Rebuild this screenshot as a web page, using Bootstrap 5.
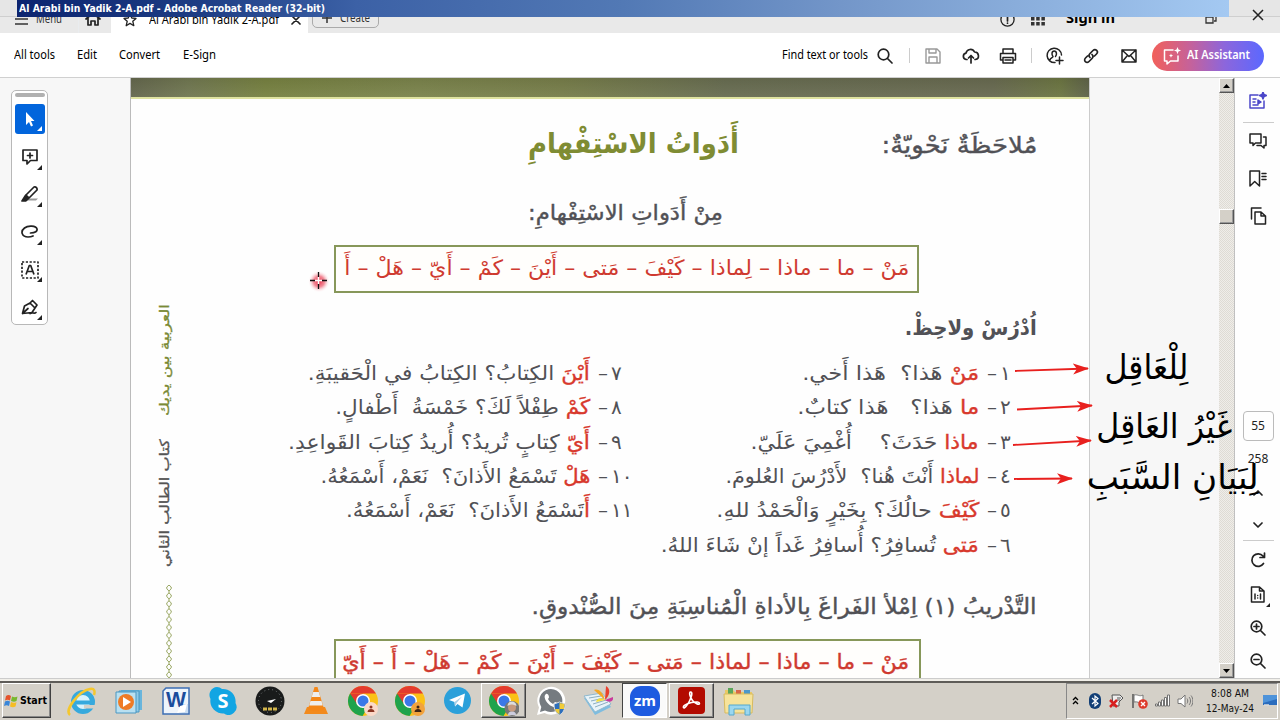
<!DOCTYPE html>
<html lang="en">
<head>
  <meta charset="UTF-8" />
  <meta name="viewport" content="width=device-width,initial-scale=1" />
  <title>Al Arabi bin Yadik 2-A.pdf - Adobe Acrobat Reader (32-bit)</title>
  <link href="https://cdn.jsdelivr.net/npm/bootstrap@5.3.0/dist/css/bootstrap.min.css" rel="stylesheet"/>
  <style>
    body {
      width: 1280px;
      height: 720px;
      overflow: hidden;
      font-family: 'Noto Sans', 'Open Sans', sans-serif;
      font-size: 12px;
      line-height: 1.2;
      color: #222;
      background: #fff;
    }
    svg { display: block; flex: none; }
    .ln { fill: none; stroke: #222; stroke-width: 1.7; stroke-linecap: round; stroke-linejoin: round; }
    [data-w] { display: inline-block; white-space: nowrap; transform-origin: left center; }
    .arabic [data-w] { transform-origin: right center; }
    /* --- Window top --- */
    .tabs-bar { height: 33px; background: #e9e9e9; overflow: hidden; padding-top: 5px; color: #333; }
    .tabs-bar .open-tab { width: 197px; background: #fff; margin-top: -5px; height: 33px; padding: 7px 7px 0 12px; }
    .create-btn { width: 67px; height: 28px; border: 1px solid #aaa; border-radius: 5px; margin-top: -5px; padding: 8px 0 0 9px; }
    .caption-bar {
      position: absolute; left: 17px; top: 0; width: 1212px; height: 17px;
      background: linear-gradient(90deg, #0c2470 0%, #1d3d84 15%, #3c61a6 28%, #5279b5 50%, #7396c9 68%, #8db1de 85%, #a4c9f2 100%);
      font: bold 11px/17px 'DejaVu Sans', sans-serif;
      color: #fff; padding-left: 2px;
    }
    .caption-left { position: absolute; left: 0; top: 0; width: 1280px; height: 17px; background: #e6e6e6; border-bottom: 1px solid #cfcfcf; }
    .tool-bar { height: 45px; border-bottom: 1px solid #d0d0d0; background: #fff; padding-top: 1px; }
    .tool-bar .v-sep { width: 1px; height: 15px; background: #ccc; }
    .ai-btn { width: 112px; height: 30px; border-radius: 15px; background: linear-gradient(90deg, #f2605a 0%, #c4629c 35%, #8c66dc 65%, #5b68ff 100%); color: #fff; font-weight: 600; padding-left: 11px; }
    /* --- Work area --- */
    .work { height: 601px; background: #f7f7f7; border-bottom: 1px solid #ccc; }
    .left-pane { width: 130px; padding: 12px 0 0 11px; }
    .quick-tools { width: 37px; height: 235px; background: #fff; border: 1px solid #b8b8b8; border-radius: 5px; padding: 2px 3px; }
    .quick-tools .grip { width: 30px; height: 4px; background: #b0b0b0; border-radius: 2px; margin-bottom: 7px; }
    .tool-cell { width: 30px; height: 37.6px; }
    .tool-cell.picked { height: 30px; background: #0265dc; border-radius: 3px; margin-bottom: 4px; }
    /* --- Book page --- */
    .sheet { width: 960px; height: 600px; background: #fefefe; border-left: 1px solid #bbb; border-right: 1px solid #ccc; overflow: hidden; }
    .band {
      height: 21px; border-bottom: 2px solid #dfe3a0;
      background: linear-gradient(180deg, rgba(60,60,40,.1), rgba(255,255,255,.06)), linear-gradient(90deg, #62654c 0%, #6f7650 6%, #75803f 14%, #79824a 30%, #757c48 45%, #666b50 62%, #66684f 90%, #6a7440 97%, #5c6047 100%);
    }
    .spine { width: 60px; height: 579px; }
    .arabic { direction: rtl; font-family: 'DejaVu Sans', sans-serif; color: #515156; white-space: nowrap; }
    .lesson { padding-right: 48px; width: 898px; font-size: 20px; }
    .title-row { height: 89px; padding-right: 4px; font-size: 23px; }
    .title-row .big { font-size: 28px; font-weight: 700; color: #7f8c33; margin-right: 142px; }
    .sub-row { height: 51px; padding-right: 318px; font-size: 21px; margin-bottom: 6px; }
    .word-box { width: 585px; height: 48px; border: 2px solid #87975a; margin-right: 122px; color: #cf3a30; font-size: 21px; padding-right: 8px; background: #fffefc; }
    .heading { height: 56px; margin-top: 8px; padding-right: 4px; font-size: 21px; font-weight: 700; }
    .items { height: 206px; }
    .items .half { width: 389px; }
    .item { height: 34.3px; position: relative; top: -1px; }
    .item .num { width: 62px; padding-left: 8px; text-align: left; }
    .item .num i { font-style: normal; margin-left: 3px; }
    .item em { font-style: normal; color: #d8392d; -webkit-text-stroke: .35px #d8392d; }
    .drill { height: 63px; margin-top: 13px; padding-right: 4px; font-size: 22px; }
    .semi { -webkit-text-stroke: .4px currentColor; }
    /* --- Scrollbar and right rail --- */
    .gap-pane { width: 129px; }
    .scroller { width: 16px; border-right: 1px solid #c0c0c0; background: repeating-conic-gradient(#dedbd4 0 25%, #efede9 0 50%) 0 0 / 2px 2px; }
    .sc-btn { width: 15px; height: 15px; background: #d4d0c8; border: 1px solid; border-color: #fff #555 #555 #fff; box-shadow: inset -1px -1px 0 #999; }
    .sc-thumb { margin-top: 116px; }
    .rail { width: 45px; background: #fefefe; padding-left: 1px; }
    .rail .cell { height: 37px; }
    .rail .h-sep { width: 31px; height: 1px; background: #ccc; }
    .page-no { width: 31px; height: 30px; border: 1px solid #bbb; border-radius: 4px; }
    /* --- Annotations over the page --- */
    .notes { position: absolute; left: 0; top: 0; pointer-events: none; }
    .note-text { position: absolute; font-size: 34px; line-height: 40px; color: #000; }
    /* --- Taskbar --- */
    .task-bar { height: 41px; background: #d4d0c8; border-top: 2px solid #f1efe9; box-shadow: inset 0 2px 0 #5e5c58; }
    .start-btn { width: 49px; height: 35px; margin-left: 2px; border: 1px solid; border-color: #fff #404040 #404040 #fff; box-shadow: inset -1px -1px 0 #888; font: bold 11px 'DejaVu Sans', sans-serif; color: #000; padding-left: 1px; }
    .slot { width: 46.9px; height: 36px; }
    .slot .running { width: 45px; height: 35px; border: 1px solid; border-color: #fff #444 #444 #fff; box-shadow: inset -1px -1px 0 #888; }
    .slot .current { border-color: #444 #fff #fff #444; background: #fafafa; box-shadow: none; }
    .tray { width: 212px; height: 36px; margin-right: 2px; border: 1px solid; border-color: #888 #fff #fff #888; color: #111; }
    .clock { width: 52px; font: 11px/15px 'DejaVu Sans Condensed', 'DejaVu Sans', sans-serif; }
  </style>
</head>
<body>
  <svg width="0" height="0" class="position-absolute">
    <defs>
      <symbol id="chrome" viewBox="0 0 30 30">
        <circle cx="15" cy="15" r="15" fill="#fbc116"/>
        <path d="M15 15L2 7.5A15 15 0 0 0 14.5 30L21.5 18.500z" fill="#1fa34c"/>
        <path d="M2 7.5A15 15 0 0 1 28 7.5H15z" fill="#e33b2e"/>
        <path d="M2 7.500L9 18l6-10.500z" fill="#e33b2e"/>
        <circle cx="15" cy="15" r="7" fill="#fff"/><circle cx="15" cy="15" r="5.500" fill="#3b78e7"/>
      </symbol>
      <symbol id="corner" viewBox="0 0 4 4"><path d="M4 0V4H0z" fill="#222"/></symbol>
      <pattern id="chain" width="6" height="7.900" patternUnits="userSpaceOnUse"><path d="M3 0L.8 2v1.800L3 6l2.200-2.200V2zM3 6v1.900" fill="none" stroke="#8b9a4c" stroke-width=".9"/></pattern>
      <marker id="tip" markerWidth="16" markerHeight="12" refX="15" refY="6" orient="auto" markerUnits="userSpaceOnUse"><path d="M0 0.500L16 6L0 11.500L4 6z" fill="#e8201e"/></marker>
      <radialGradient id="glow"><stop offset="0" stop-color="#e8304a"/><stop offset=".5" stop-color="#f07080" stop-opacity=".8"/><stop offset="1" stop-color="#fff" stop-opacity="0"/></radialGradient>
    </defs>
  </svg>

  <!-- Tabs, mostly covered by the caption -->
  <div class="position-relative">
    <div class="tabs-bar d-flex">
      <div class="d-flex align-items-center gap-2" style="width:78px;padding-left:15px">
        <svg width="13" height="12"><path d="M0 1h13M0 6h13M0 11h13" stroke="#333" stroke-width="1.500"/></svg><span data-w="26">Menu</span>
      </div>
      <div class="d-flex align-items-center border-start border-secondary-subtle" style="width:33px;padding-left:6px">
        <svg width="16" height="16" class="ln"><path d="M1 8L8 2l7 6M3 7v7h3V10h4v4h3V7"/></svg>
      </div>
      <div class="open-tab d-flex align-items-center justify-content-between">
        <svg width="14" height="14" class="ln" style="stroke-width:1.300"><path d="M7 1l1.800 4 4.200.4-3.200 2.900 1 4.400L7 10.400 3.200 12.700l1-4.400L1 5.400 5.200 5z"/></svg>
        <span data-w="130" class="text-black">Al Arabi bin Yadik 2-A.pdf</span>
        <svg width="10" height="10" class="ln"><path d="M1 1l8 8M9 1l-8 8"/></svg>
      </div>
      <div class="create-btn d-flex align-items-center gap-2 ms-1">
        <svg width="10" height="10"><path d="M0 5h10M5 0v10" stroke="#333" stroke-width="1.500"/></svg><span data-w="30">Create</span>
      </div>
      <div class="d-flex align-items-center ms-auto" style="width:281px;padding-left:1px">
        <svg width="15" height="15" class="ln"><circle cx="7.500" cy="7.500" r="6.600" style="stroke-width:1.300"/><path d="M7.500 4v5M7.500 11v.2"/></svg>
        <svg width="14" height="14" fill="#333" class="ms-3"><path d="M0 0h3.500v3.500H0zM5.200 0h3.500v3.500H5.200zM10.400 0h3.500v3.500h-3.500zM0 5h3.500v3.500H0zM5.200 5h3.500v3.500H5.200zM10.400 5h3.500v3.500h-3.500zM0 10h3.500v3.500H0zM5.200 10h3.500v3.500H5.200zM10.400 10h3.500v3.500h-3.500z"/></svg>
        <b data-w="49" class="text-black" style="font-size:14px;margin-left:21px;line-height:1;padding-bottom:3px">Sign in</b>
        <svg width="12" height="12" fill="none" stroke="#333" stroke-width="1.300" style="margin-left:90px"><path d="M1 4h7v6H1zM4 3V1h7v7H9"/></svg>
      </div>
    </div>
    <div class="caption-left"></div>
    <div class="caption-bar"><span data-w="306">Al Arabi bin Yadik 2-A.pdf - Adobe Acrobat Reader (32-bit)</span></div>
    <svg width="12" height="12" class="position-absolute" style="left:1252px;top:9px"><path d="M1 1l10 10M11 1L1 11" stroke="#222" stroke-width="1.500"/></svg>
  </div>

  <!-- Toolbar -->
  <div class="tool-bar d-flex align-items-center text-black">
    <div style="width:63px;padding-left:14px"><span data-w="41">All tools</span></div>
    <div style="width:42px;padding-left:14px"><span data-w="20">Edit</span></div>
    <div style="width:64px;padding-left:14px"><span data-w="41">Convert</span></div>
    <div style="width:80px;padding-left:14px"><span data-w="33">E-Sign</span></div>
    <div class="d-flex align-items-center ms-auto">
      <span data-w="86">Find text or tools</span>
      <svg width="16" height="16" class="ln" style="margin-left:9px"><circle cx="6.500" cy="6.500" r="5.300"/><path d="M10.500 10.500L15 15"/></svg>
      <div class="v-sep" style="margin:0 15px 0 16px"></div>
      <svg width="16" height="16" class="ln" style="stroke:#999;stroke-width:1.400"><path d="M1 1h11l3 3v11H1zM4 1v4h7V1M4 15V9h8v6"/></svg>
      <svg width="18" height="16" class="ln" style="margin-left:21px"><path d="M5 11.500H4a3.200 3.200 0 0 1 0-6.300A4.500 4.500 0 0 1 12.500 4 3.800 3.800 0 0 1 13.500 11.500H13M9 15V8M6.500 10L9 7.500 11.500 10"/></svg>
      <svg width="18" height="16" class="ln" style="margin-left:19px;stroke-width:1.500"><path d="M4 5V1h10v4M4 12H1.500V5.500h15V12H14M4 9.500h10V15H4zM6 12h6"/></svg>
      <div class="v-sep" style="margin:0 14px 0 14px"></div>
      <svg width="18" height="18" class="ln" style="stroke-width:1.500"><path d="M9 15.500A7.200 7.200 0 1 1 15.500 8M4 13c0-2 3-2 3-3.500C5.500 8 5.500 4 8.200 4s2.800 4 1.300 5.500M13.500 10v7M10 13.500h7"/></svg>
      <svg width="16" height="16" class="ln" style="margin-left:19px"><path d="M7 9.500C5.500 8 6 6.500 7 5.500L10 2.500c2.500-2.500 6 1 3.500 3.500L11.500 8M9 6.500c1.500 1.500 1 3 0 4L6 13.500c-2.500 2.500-6-1-3.500-3.500L4.500 8"/></svg>
      <svg width="16" height="14" class="ln" style="margin-left:22px;stroke-width:1.500"><path d="M1 1h14v12H1zL8 7.500 15 1M1 13l5-6M15 13l-5-6"/></svg>
      <div class="ai-btn d-flex align-items-center" style="margin:0 16px 0 15px">
        <svg width="19" height="18" class="ln" style="stroke:#fff;stroke-width:1.500"><path d="M10 3H1.500v11H4v3l3.500-3H15V9"/><path d="M14.500 0l1 2.600 2.600 1-2.600 1-1 2.600-1-2.600-2.600-1 2.600-1zM8 6.500l.6 1.500 1.500.600-1.500.6L8 10.700l-.6-1.500L6 8.600 7.400 8z" fill="#fff" stroke="none"/></svg>
        <span data-w="63" style="margin-left:5px">AI Assistant</span>
      </div>
    </div>
  </div>

  <div class="work d-flex position-relative">
    <div class="left-pane">
      <div class="quick-tools">
        <div class="grip"></div>
        <div class="tool-cell picked d-flex align-items-center justify-content-center position-relative">
          <svg width="10" height="15"><path d="M1 0l8.500 9H6l2 4.500-2 1L4 10l-3 3z" fill="#fff"/></svg>
          <svg width="5" height="5" class="position-absolute" style="right:3px;bottom:3px"><path d="M5 0V5H0z" fill="#fff"/></svg>
        </div>
        <div class="tool-cell d-flex align-items-center justify-content-center position-relative">
          <svg width="16" height="16" class="ln"><path d="M1 1h14v10.500H8.500L5 15v-3.500H1zM8 4v5M5.500 6.500h5"/></svg>
          <svg width="5" height="5" class="position-absolute" style="right:3px;bottom:6px"><use href="#corner"/></svg>
        </div>
        <div class="tool-cell d-flex align-items-center justify-content-center position-relative">
          <svg width="18" height="16" class="ln"><path d="M9 12.500h8l-2 2H6z" fill="#999" stroke="none"/><path d="M5 9l8-8c2-.5 3.500 1 3 3L8 12zM5 9l3 3"/><path d="M4.500 9.500l3 3-3 2.500H1z" fill="#222"/></svg>
          <svg width="5" height="5" class="position-absolute" style="right:3px;bottom:6px"><use href="#corner"/></svg>
        </div>
        <div class="tool-cell d-flex align-items-center justify-content-center position-relative">
          <svg width="18" height="14" class="ln"><path d="M9.500 8c5 0 7-2 6.500-4C15 .5 7 .2 3.500 3-1 6.500 1 12 7 12c2.500 0 4-.5 5-1"/></svg>
          <svg width="5" height="5" class="position-absolute" style="right:3px;bottom:6px"><use href="#corner"/></svg>
        </div>
        <div class="tool-cell d-flex align-items-center justify-content-center position-relative">
          <svg width="18" height="18" class="ln" style="stroke-linecap:butt"><path d="M1 1h16v16H1z" stroke-dasharray="2.200 1.600"/><path d="M5 13.500L8.300 4.500h1.400L13 13.500M6.200 10.500h5.600"/></svg>
          <svg width="5" height="5" class="position-absolute" style="right:3px;bottom:6px"><use href="#corner"/></svg>
        </div>
        <div class="tool-cell d-flex align-items-center justify-content-center position-relative">
          <svg width="18" height="17" class="ln"><path d="M1.500 14.500L3.500 7 9 4l5 5-3 4.500zL7 9.500M9 4l2.500-2.500L16 6l-2 3M9 14.500c3-2 4 1 6-1"/></svg>
          <svg width="5" height="5" class="position-absolute" style="right:3px;bottom:6px"><use href="#corner"/></svg>
        </div>
      </div>
    </div>

    <!-- Scanned book page -->
    <div class="sheet">
      <div class="band"></div>
      <div class="d-flex">
        <svg class="spine" font-family="DejaVu Sans, sans-serif" font-size="13">
          <g direction="rtl">
            <text transform="translate(38 205) rotate(-90)" textLength="112" lengthAdjust="spacingAndGlyphs" fill="#7a8a35" stroke="#7a8a35" stroke-width=".3">العربية بين يديك</text>
            <text transform="translate(38 340) rotate(-90)" textLength="128" lengthAdjust="spacingAndGlyphs" fill="#555" stroke="#555" stroke-width=".3">كتاب الطالب الثاني</text>
          </g>
          <rect width="6" height="95" transform="translate(35 486)" fill="url(#chain)"/>
        </svg>
        <div class="lesson arabic">
          <div class="title-row d-flex align-items-center">
            <span class="semi" data-w="156" style="margin-top:4px">مُلاحَظَةٌ نَحْويّةٌ:</span>
            <span class="big"><span data-w="211">أَدَواتُ الاسْتِفْهامِ</span></span>
          </div>
          <div class="sub-row d-flex align-items-center"><span class="semi" data-w="195">مِنْ أَدَواتِ الاسْتِفْهامِ:</span></div>
          <div class="word-box d-flex align-items-center"><span data-w="565">مَنْ – ما – ماذا – لِماذا – كَيْفَ – مَتى – أَيْنَ – كَمْ – أَيّ – هَلْ – أَ</span></div>
          <div class="heading d-flex align-items-center"><span data-w="132">اُدْرُسْ ولاحِظْ.</span></div>
          <div class="items d-flex">
            <div class="half" id="colA"></div>
            <div class="half" id="colB"></div>
          </div>
          <div class="drill d-flex align-items-center"><span class="semi" data-w="505">التَّدْريبُ (١) اِمْلأ الفَراغَ بِالأداةِ الْمُناسِبَةِ مِنَ الصُّنْدوقِ.</span></div>
          <div class="word-box d-flex align-items-center" style="width:587px;margin-right:120px;padding-right:10px"><span class="semi" data-w="567">مَنْ – ما – ماذا – لماذا – مَتى – كَيْفَ – أَيْنَ – كَمْ – هَلْ – أَ – أَيّ</span></div>
        </div>
      </div>
    </div>
    <div class="gap-pane"></div>

    <div class="scroller d-flex flex-column ms-auto">
      <div class="sc-btn d-flex align-items-center justify-content-center"><svg width="7" height="4"><path d="M0 4L3.500 0 7 4z"/></svg></div>
      <div class="sc-btn sc-thumb"></div>
      <div class="sc-btn d-flex align-items-center justify-content-center mt-auto"><svg width="7" height="4"><path d="M0 0h7L3.500 4z"/></svg></div>
    </div>

    <div class="rail d-flex flex-column align-items-center">
      <div class="cell d-flex align-items-center" style="height:44px"><svg width="18" height="17" class="ln" style="stroke:#4b47c9;stroke-width:1.500"><path d="M9 3H1v13h14V9M4 7h3M4 10h2M4 13h5"/><path d="M14 0l1 2.500L17.500 3.500 15 4.500 14 7l-1-2.500-2.500-1 2.500-1zM9 8l3 2-3 2z" fill="#4b47c9"/></svg></div>
      <div class="h-sep"></div>
      <div class="cell d-flex align-items-center"><svg width="18" height="17" class="ln" style="stroke-width:1.500"><path d="M1 1h11v9H6.500L4 12.500V10H1zM14.500 4H17v8.500h-2V15l-3-2.500H8"/></svg></div>
      <div class="cell d-flex align-items-center"><svg width="18" height="17" class="ln" style="stroke-width:1.500"><path d="M1 1h9.500v15L5.700 11.500 1 16zM13 3.500h4M13 6.500h4M13 9.500h4"/></svg></div>
      <div class="cell d-flex align-items-center"><svg width="17" height="18" class="ln" style="stroke-width:1.500"><path d="M5 5h6l4.500 4v8H5zM11 5v4h4.500M1.500 12V1H11"/></svg></div>
      <div class="page-no d-flex align-items-center justify-content-center" style="margin-top:177px">55</div>
      <div class="d-flex align-items-center" style="height:36px">258</div>
      <div class="d-flex align-items-center" style="height:32px"><svg width="10" height="6" class="ln"><path d="M1 5l4-4 4 4"/></svg></div>
      <div class="d-flex align-items-center" style="height:31px"><svg width="10" height="6" class="ln"><path d="M1 1l4 4 4-4"/></svg></div>
      <div class="h-sep"></div>
      <div class="d-flex align-items-center" style="height:37px"><svg width="16" height="16" class="ln"><path d="M13.500 11.500a6.300 6.300 0 1 1-.5-7.500M14.500 1v4.500H10"/></svg></div>
      <div class="d-flex align-items-center position-relative" style="height:33px"><svg width="16" height="17" class="ln" style="stroke-width:1.500"><path d="M1.500 1h8L14 5v11H1.500zM9.500 1v4H14M5 8v5M10.500 8v5M7.700 9.500v.1M7.700 12v.1"/></svg><svg width="4" height="4" class="position-absolute" style="right:-4px;bottom:4px"><use href="#corner"/></svg></div>
      <div class="d-flex align-items-center" style="height:33px"><svg width="16" height="16" class="ln"><circle cx="6.500" cy="6.500" r="5.300"/><path d="M10.500 10.500L15 15M4 6.500h5M6.500 4v5"/></svg></div>
      <div class="d-flex align-items-center" style="height:33px"><svg width="16" height="16" class="ln"><circle cx="6.500" cy="6.500" r="5.300"/><path d="M10.500 10.500L15 15M4 6.500h5"/></svg></div>
    </div>

    <!-- Teacher's marks -->
    <svg class="notes" width="1280" height="600" stroke="#e8201e" stroke-width="1.800">
      <path d="M1015 293L1088 290.500" marker-end="url(#tip)"/>
      <path d="M1017 331.500L1092 327.500" marker-end="url(#tip)"/>
      <path d="M1013 367L1091 362.500" marker-end="url(#tip)"/>
      <path d="M1014 401L1072 400.500" marker-end="url(#tip)"/>
      <circle cx="319" cy="203.500" r="11" fill="url(#glow)" stroke="none"/>
      <path d="M310 202.500h5M322 202.500h5M318.500 194v5M318.500 206v5" stroke="#111" stroke-width="1.300"/>
      <path d="M318.500 199v7M315 202.500h7" stroke="#fff" stroke-width="1.500"/>
    </svg>
    <div class="arabic">
      <div class="note-text" style="right:92px;top:269px"><span data-w="84">لِلْعَاقِل</span></div>
      <div class="note-text" style="right:48px;top:328px"><span data-w="136">غَيْرُ العَاقِل</span></div>
      <div class="note-text" style="right:21px;top:379px"><span data-w="172">لِبَيَانِ السَّبَبِ</span></div>
    </div>
  </div>

  <!-- Taskbar -->
  <div class="task-bar d-flex align-items-center">
    <div class="start-btn d-flex align-items-center">
      <svg width="16" height="14"><path d="M2 2c2-1.500 3.500-1 5 0L6 6.500c-1.500-1-3-1.300-5 0z" fill="#e5532c"/><path d="M8 2.500c2 1 3.500 1 5.500 0L12.500 7c-2 1.200-3.500.8-5.500 0z" fill="#79b82e"/><path d="M1 7.500c2-1.300 3.500-1 5 0L5 12c-1.500-1-3-1.200-5 0z" fill="#3a86d8"/><path d="M7 8c2 1 3.500 1.200 5.500 0l-1 4.500c-2 1-3.500.8-5.500 0z" fill="#f5bd25"/></svg>
      <span data-w="27">Start</span>
    </div>
    <div class="d-flex align-items-center" style="margin-left:7.500px">
      <div class="slot"><svg width="30" height="30" viewBox="0 0 30 30"><circle cx="16" cy="16" r="9.500" fill="#d8f2fc" stroke="#36a9dd" stroke-width="5"/><path d="M9 14.500h14v4H9z" fill="#36a9dd"/><path d="M17 19h12v3.500H17z" fill="#d4d0c8"/><path d="M3 29C-3 24 12 5 23 3c5-1 5 3 4 6" fill="none" stroke="#f4c72e" stroke-width="2.500"/></svg></div>
      <div class="slot"><svg width="28" height="28" viewBox="0 0 28 28"><path d="M6 3h21v20H6z" fill="#69b5dc"/><path d="M4 4h20v21H4z" fill="#8fcbe8" stroke="#4a97c2"/><path d="M1 5h20v21H1z" fill="#b9e0f1" stroke="#4a97c2"/><circle cx="11" cy="15" r="8" fill="#ee7b26"/><path d="M8 10l8 5-8 5z" fill="#fff"/></svg></div>
      <div class="slot"><svg width="28" height="28" viewBox="0 0 28 28"><path d="M4 1h23v26H1V4z" fill="#eef4fb" stroke="#3c6eb4" stroke-width="1.500"/><path d="M17 17h9v9h-9z" fill="#c8ddf3"/><text x="4" y="20" font-family="Liberation Sans, sans-serif" font-weight="700" font-size="22" textLength="20" lengthAdjust="spacingAndGlyphs" fill="#1b4c9c">W</text><path d="M15 26l3-7 7-2-2 8z" fill="#fff"/></svg></div>
      <div class="slot"><svg width="28" height="28" viewBox="0 0 28 28"><path d="M8 0a8 8 0 0 1 5 2A12.500 12.500 0 0 1 26.500 16 8 8 0 0 1 15 26.500 12.500 12.500 0 0 1 1.500 12 8 8 0 0 1 8 0z" fill="#12a5e3"/><text x="14" y="21" text-anchor="middle" font-family="Noto Sans, sans-serif" font-weight="700" font-size="20" fill="#fff">S</text></svg></div>
      <div class="slot"><svg width="30" height="30" viewBox="0 0 30 30"><circle cx="15" cy="15" r="14.500" fill="#191b1b"/><circle cx="15" cy="15" r="11.500" fill="none" stroke="#7b8080" stroke-dasharray="1 3"/><path d="M12 15l9-2-5 4z" fill="#fff"/><path d="M8 23h14" stroke="#d3b64c" stroke-width="3" stroke-dasharray="4 1"/></svg></div>
      <div class="slot"><svg width="26" height="29" viewBox="0 0 26 29"><path d="M4 21h18l3 7H1z" fill="#f28a1d"/><path d="M11.500 1h3L21 23c-3 3-13 3-16 0z" fill="#f48719"/><path d="M10.200 6h5.600l1.500 5H8.700zM7.500 15h11l1.200 4.500H6.200z" fill="#eee"/></svg></div>
      <div class="slot"><svg width="30" height="30" viewBox="0 0 30 30"><use href="#chrome"/><circle cx="23" cy="23" r="7" fill="#fbd9c8"/><circle cx="23" cy="21" r="1.500" fill="#8b3521"/><path d="M19.500 26c0-4 7-4 7 0z" fill="#8b3521"/></svg></div>
      <div class="slot"><svg width="30" height="30" viewBox="0 0 30 30"><use href="#chrome"/><circle cx="23" cy="23" r="7" fill="#f2a33c"/><circle cx="23" cy="21" r="1.500" fill="#402512"/><path d="M19.500 26c0-4 7-4 7 0z" fill="#402512"/></svg></div>
      <div class="slot"><svg width="27" height="27" viewBox="0 0 27 27"><circle cx="13.500" cy="13.500" r="13.500" fill="#2ba0da"/><path d="M5 13L21 6.500 18.500 20.500 13.500 17 11 19.500 10.500 15z" fill="#fff"/><path d="M10.500 15L18 9.500 12.500 16 11 19.500z" fill="#a9cfe6"/></svg></div>
      <div class="slot"><div class="running"><svg width="30" height="30" viewBox="0 0 30 30"><use href="#chrome"/><circle cx="23" cy="22.500" r="7.500" fill="#777"/><path d="M19 29c0-5 8-5 8 0z" fill="#ccd"/><circle cx="23" cy="21.500" r="4" fill="#c79a7f"/><path d="M18.500 20c0-6 9-6 9 0-3-2-6-2-9 0z" fill="#ddd"/></svg></div></div>
      <div class="slot"><svg width="30" height="30" viewBox="0 0 30 30"><path d="M1 29l2-7.500A14 14 0 1 1 8.500 27z" fill="#fff"/><path d="M4 26l1.300-5A11.500 11.500 0 1 1 9 24.500z" fill="#757b80"/><path d="M10 8c2-1 3 2 3 3.500l-1 1.500c1 2 3 4 5 5l2-2c2 .5 4 1.500 3.500 3-1 3-6 3-10-1S7.500 9.500 10 8z" fill="#fff"/><path d="M18 18l5.500-2 5.500 2c0 6-2 9-5.500 11-3.500-2-5.500-5-5.500-11z" fill="#2e6fbc" stroke="#ddd"/><path d="M23.500 17v6H28l.5-5zM23.500 23v5.500c-2-1.500-4-3-4.500-5.500z" fill="#f1cc38"/></svg></div>
      <div class="slot"><svg width="30" height="30" viewBox="0 0 30 30"><path d="M1 12l18-3 9 12-16 8z" fill="#7ebde0"/><path d="M1 10l18-3 9 11-16 8z" fill="#e8f3f9" stroke="#8fb9cf"/><path d="M6 12l12-2M8 15l13-3M10 18l13-4M12 21l13-5" stroke="#8daec0"/><path d="M22 14L11 4c5-2 9 3 11 10z" fill="#f5a623"/><path d="M22 14L23 0c5 3 4 9-1 14z" fill="#e8402e"/><path d="M22 14l8-3c1 5-4 6-8 3z" fill="#c93a9c"/><path d="M22 14l-9 2c1-4 5-5 9-2z" fill="#f4de39"/></svg></div>
      <div class="slot"><div class="running current"><svg width="30" height="30" viewBox="0 0 30 30"><rect width="30" height="30" rx="11" fill="#1e5be0"/><text x="4" y="20" font-family="Open Sans, sans-serif" font-weight="700" font-size="15" textLength="22" lengthAdjust="spacingAndGlyphs" fill="#fff">zm</text></svg></div></div>
      <div class="slot"><div class="running"><svg width="27" height="27" viewBox="0 0 27 27"><rect width="27" height="27" rx="4" fill="#b30b00"/><path d="M12.500 5c2.500 0 1 5-1 9s-5 8-6 6.500 3-4 8-5 8-.5 8 1-4 .5-7-3-3.500-8.500-2-8.500z" fill="none" stroke="#fff" stroke-width="1.600"/></svg></div></div>
      <div class="slot"><svg width="31" height="30" viewBox="0 0 31 30"><path d="M2 4h8l2 2h17v20H2z" fill="#e9c964"/><path d="M5 2h5v6H5z" fill="#5ba75a"/><path d="M13 4h5v4h-5z" fill="#d86748"/><path d="M21 4h6v4h-6z" fill="#4d98c9"/><path d="M1 8h29l-1 19H2z" fill="#f6e39b" stroke="#d8bb5e"/><path d="M6 19h21v10h-5v-6H11v6H6z" fill="#9bd7ef" stroke="#55a8cd"/></svg></div>
    </div>
    <div class="tray d-flex align-items-center ms-auto">
      <svg width="7" height="9" style="margin-left:5px" fill="none" stroke="#000" stroke-width="1.300"><path d="M1 4l2.500-2.500L6 4M1 8l2.500-2.500L6 8"/></svg>
      <svg width="12" height="16" style="margin-left:10px"><rect width="12" height="16" rx="6" fill="#123f77"/><path d="M3 5l6 5.500L6 13V3l3 2.500L3 11" fill="none" stroke="#fff" stroke-width="1.200"/></svg>
      <svg width="15" height="16" style="margin-left:8px"><path d="M3 2h8l3 3-4 4v4H4z" fill="#eee" stroke="#555"/><path d="M8 5h4M8 7h3" stroke="#555"/><path d="M1 7l7 7M8 7l-7 7" stroke="#d81f1f" stroke-width="2.500"/></svg>
      <svg width="16" height="16" style="margin-left:8px"><path d="M1 1v14" stroke="#555" stroke-width="1.500"/><path d="M2 2c4-1 5 2 9 0v7c-4 2-5-1-9 0z" fill="#fff" stroke="#777"/><circle cx="11" cy="11" r="4.800" fill="#dd3a2b"/><path d="M9 9l4 4M13 9l-4 4" stroke="#fff" stroke-width="1.400"/></svg>
      <svg width="16" height="13" style="margin-left:7px" fill="#fff" stroke="#666" stroke-width=".9"><path d="M.5 10h2v2h-2zM3.500 8h2v4h-2zM6.500 6h2v6h-2zM9.500 3.500h2V12h-2zM12.500 1h2v11h-2z"/></svg>
      <svg width="16" height="14" style="margin-left:6px" fill="none" stroke="#777"><path d="M1 5h3l4-4v12L4 9.500H1z" fill="#fff"/><path d="M10 4.500c1 1.500 1 3.500 0 5M12 3c2 2 2 6 0 8M14 1.500c2.500 3 2.500 8 0 11"/></svg>
      <div class="clock text-center" style="margin-left:11px"><div><span data-w="38">8:08 AM</span></div><div><span data-w="48">12-May-24</span></div></div>
      <svg width="14" height="13" style="margin-left:7px"><path d="M0 1h14v10H0z" fill="#2a6cbd"/><path d="M0 1h14v4L0 9z" fill="#4e93da"/><path d="M1 11h5" stroke="#ddd" stroke-width="1.500"/></svg>
    </div>
  </div>

  <script src="https://cdn.jsdelivr.net/npm/bootstrap@5.3.0/dist/js/bootstrap.bundle.min.js"></script>
  <script>
    // number, question word, rest of the line, printed width
    const colA=[
      ['١','مَنْ',' هَذا؟&nbsp; هَذا أَخي.',177],
      ['٢','ما',' هَذا؟&nbsp;&nbsp; هَذا كتابٌ.',182],
      ['٣','ماذا',' حَدَثَ؟&nbsp;&nbsp;&nbsp; أُغْمِيَ عَلَيّ.',228],
      ['٤','لماذا',' أَنْتَ هُنا؟&nbsp; لأَدْرُسَ العُلومَ.',254],
      ['٥','كَيْفَ',' حالُكَ؟ بِخَيْرٍ وَالْحَمْدُ للهِ.',263],
      ['٦','مَتى',' تُسافِرُ؟ أُسافِرُ غَداً إنْ شَاءَ اللهُ.',318]
    ];
    const colB=[
      ['٧','أَيْنَ',' الكِتابُ؟ الكِتابُ في الْحَقيبَةِ.',282],
      ['٨','كَمْ',' طِفْلاً لَكَ؟ خَمْسَةُ&nbsp; أَطْفالٍ.',255],
      ['٩','أَيّ',' كِتابٍ تُريدُ؟ أُريدُ كِتابَ القَواعِدِ.',302],
      ['١٠','هَلْ',' تَسْمَعُ الأَذانَ؟&nbsp; نَعَمْ، أَسْمَعُهُ.',270],
      ['١١','أَ','تَسْمَعُ الأَذانَ؟&nbsp; نَعَمْ، أَسْمَعُهُ.',244]
    ];
    function fill(id,rows){
      document.getElementById(id).innerHTML=rows.map(r=>`<div class="item d-flex align-items-center">
        <div class="num"><i>${r[0]}</i>–</div><span data-w="${r[3]}"><em>${r[1]}</em>${r[2]}</span>
      </div>`).join('');
    }
    fill('colA',colA);
    fill('colB',colB);
    document.querySelectorAll('.slot, .running').forEach(s=>s.classList.add('d-flex','align-items-center','justify-content-center'));
    // set each line to its printed width
    document.querySelectorAll('[data-w]').forEach(e=>{
      let n=e.getBoundingClientRect().width,w=+e.dataset.w;
      e.style.transform=`scaleX(${w/n})`;
      e.style.marginInlineEnd=(w-n)+'px';
    });
  </script>
</body>
</html>
